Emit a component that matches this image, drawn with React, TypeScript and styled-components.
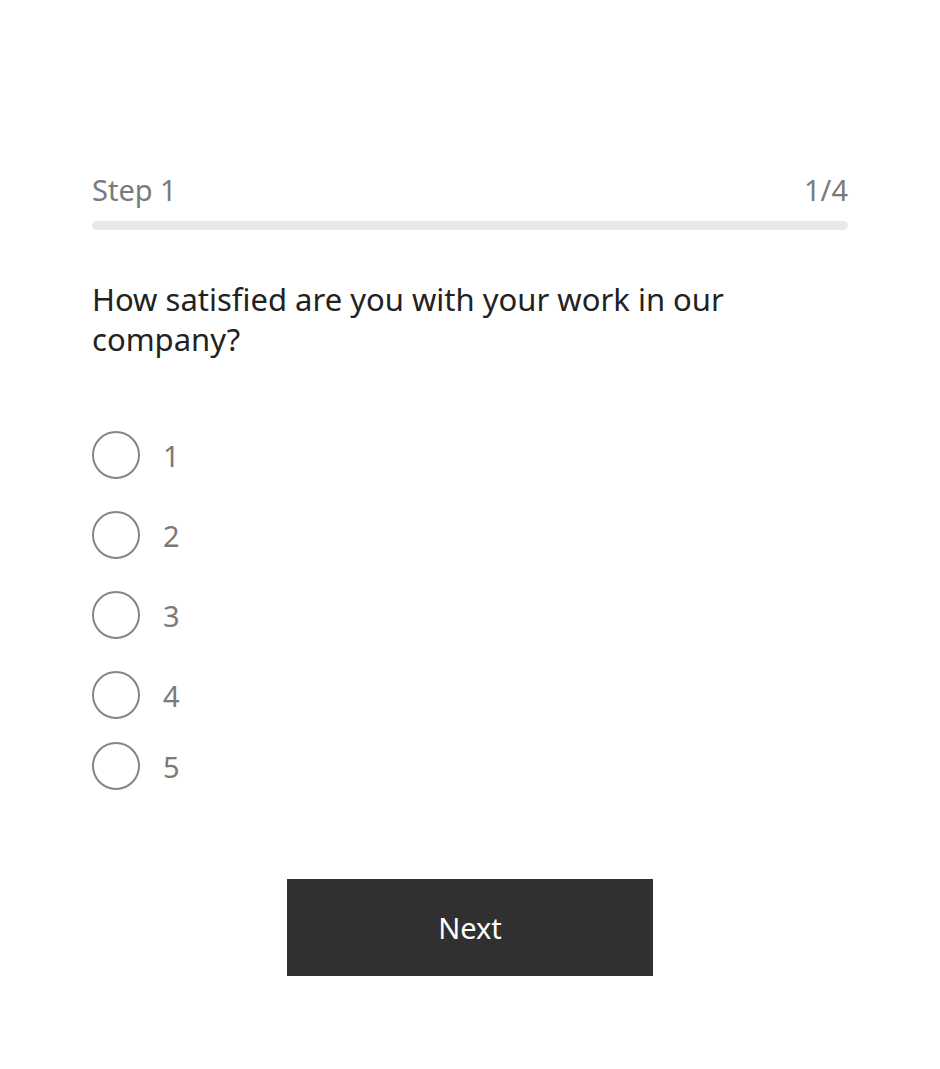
import React, { useState } from "react";
import styled, { createGlobalStyle } from "styled-components";

const options = [1, 2, 3, 4, 5];

const App = () => {
  const [picked, setPicked] = useState<number | null>(null);

  return (
    <Page>
      <GlobalStyle />
      <Survey>
        <StepRow>
          <span>Step 1</span>
          <span>1/4</span>
        </StepRow>
        <Track>
          <Fill style={{ width: "0%" }} />
        </Track>
        <Question>How satisfied are you with your work in our company?</Question>
        <Options>
          {options.map((n, i) => (
            <Option key={n} $last={i === options.length - 1} onClick={() => setPicked(n)}>
              <Circle $on={picked === n} />
              <Label>{n}</Label>
            </Option>
          ))}
        </Options>
        <NextButton>Next</NextButton>
      </Survey>
    </Page>
  );
};

export default App;

const GlobalStyle = createGlobalStyle`
  body {
    margin: 0;
    background: #fff;
    font-family: "Noto Sans", "Open Sans", sans-serif;
  }
`;

const Page = styled.div`
  width: 100%;
  min-height: 1069px;
  display: flex;
  justify-content: center;
`;
const Survey = styled.div`
  width: 756px;
  padding-top: 170px;
  display: flex;
  flex-direction: column;
`;
const StepRow = styled.div`
  display: flex;
  justify-content: space-between;
  font-size: 29px;
  line-height: 40px;
  color: #7a7a7a;
`;
const Track = styled.div`
  margin-top: 11px;
  height: 9px;
  border-radius: 5px;
  background-color: #e8e8e8;
  overflow: hidden;
`;
const Fill = styled.div`
  height: 100%;
  background-color: #2f2f2f;
`;
const Question = styled.div`
  margin-top: 49px;
  font-size: 31px;
  line-height: 40px;
  color: #222;
  width: 680px;
`;
const Options = styled.div`
  margin-top: 72px;
  display: flex;
  flex-direction: column;
`;
const Option = styled.label<{ $last: boolean }>`
  display: flex;
  align-items: center;
  gap: 23px;
  height: 48px;
  margin-bottom: ${(p) => (p.$last ? "0" : "32px")};
  &:nth-child(4) {
    margin-bottom: 23px;
  }
  cursor: pointer;
`;
const Circle = styled.span<{ $on: boolean }>`
  box-sizing: border-box;
  width: 48px;
  height: 48px;
  border-radius: 50%;
  border: 2px solid #858585;
  background: ${(p) => (p.$on ? "radial-gradient(#2f2f2f 40%, transparent 42%)" : "none")};
`;
const Label = styled.span`
  font-size: 29px;
  color: #7a7a7a;
`;
const NextButton = styled.button`
  align-self: center;
  margin-top: 89px;
  width: 366px;
  height: 97px;
  border: none;
  background-color: #303030;
  color: #fff;
  font-family: inherit;
  font-size: 29px;
`;
